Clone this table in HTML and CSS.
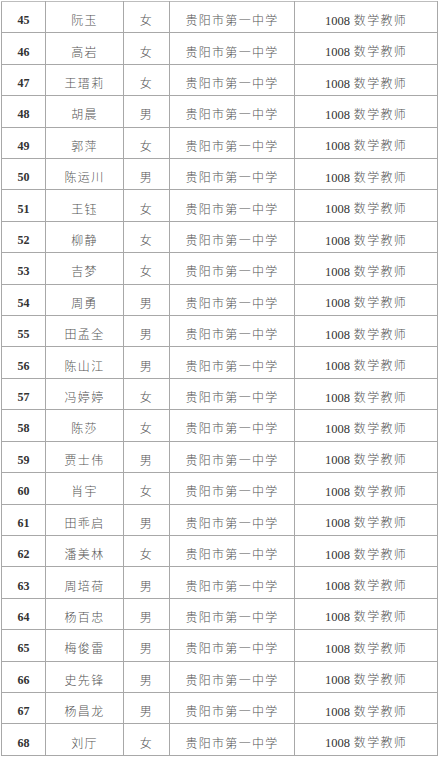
FILE: index.html
```html
<!DOCTYPE html>
<html lang="zh">
<head>
<meta charset="utf-8">
<link rel="stylesheet" href="styles.css">
</head>
<body>
<div class="page">
<table class="roster">
<colgroup><col class="c-no"><col class="c-name"><col class="c-sex"><col class="c-school"><col class="c-job"></colgroup>
<tbody>
<tr><td class="no">45</td><td class="cn">阮玉</td><td class="cn">女</td><td class="cn">贵阳市第一中学</td><td class="job"><span class="num">1008</span> 数学教师</td></tr>
<tr><td class="no">46</td><td class="cn">高岩</td><td class="cn">女</td><td class="cn">贵阳市第一中学</td><td class="job"><span class="num">1008</span> 数学教师</td></tr>
<tr><td class="no">47</td><td class="cn">王瑨莉</td><td class="cn">女</td><td class="cn">贵阳市第一中学</td><td class="job"><span class="num">1008</span> 数学教师</td></tr>
<tr><td class="no">48</td><td class="cn">胡晨</td><td class="cn">男</td><td class="cn">贵阳市第一中学</td><td class="job"><span class="num">1008</span> 数学教师</td></tr>
<tr><td class="no">49</td><td class="cn">郭萍</td><td class="cn">女</td><td class="cn">贵阳市第一中学</td><td class="job"><span class="num">1008</span> 数学教师</td></tr>
<tr><td class="no">50</td><td class="cn">陈运川</td><td class="cn">男</td><td class="cn">贵阳市第一中学</td><td class="job"><span class="num">1008</span> 数学教师</td></tr>
<tr><td class="no">51</td><td class="cn">王钰</td><td class="cn">女</td><td class="cn">贵阳市第一中学</td><td class="job"><span class="num">1008</span> 数学教师</td></tr>
<tr><td class="no">52</td><td class="cn">柳静</td><td class="cn">女</td><td class="cn">贵阳市第一中学</td><td class="job"><span class="num">1008</span> 数学教师</td></tr>
<tr><td class="no">53</td><td class="cn">吉梦</td><td class="cn">女</td><td class="cn">贵阳市第一中学</td><td class="job"><span class="num">1008</span> 数学教师</td></tr>
<tr><td class="no">54</td><td class="cn">周勇</td><td class="cn">男</td><td class="cn">贵阳市第一中学</td><td class="job"><span class="num">1008</span> 数学教师</td></tr>
<tr><td class="no">55</td><td class="cn">田孟全</td><td class="cn">男</td><td class="cn">贵阳市第一中学</td><td class="job"><span class="num">1008</span> 数学教师</td></tr>
<tr><td class="no">56</td><td class="cn">陈山江</td><td class="cn">男</td><td class="cn">贵阳市第一中学</td><td class="job"><span class="num">1008</span> 数学教师</td></tr>
<tr><td class="no">57</td><td class="cn">冯婷婷</td><td class="cn">女</td><td class="cn">贵阳市第一中学</td><td class="job"><span class="num">1008</span> 数学教师</td></tr>
<tr><td class="no">58</td><td class="cn">陈莎</td><td class="cn">女</td><td class="cn">贵阳市第一中学</td><td class="job"><span class="num">1008</span> 数学教师</td></tr>
<tr><td class="no">59</td><td class="cn">贾士伟</td><td class="cn">男</td><td class="cn">贵阳市第一中学</td><td class="job"><span class="num">1008</span> 数学教师</td></tr>
<tr><td class="no">60</td><td class="cn">肖宇</td><td class="cn">女</td><td class="cn">贵阳市第一中学</td><td class="job"><span class="num">1008</span> 数学教师</td></tr>
<tr><td class="no">61</td><td class="cn">田乖启</td><td class="cn">男</td><td class="cn">贵阳市第一中学</td><td class="job"><span class="num">1008</span> 数学教师</td></tr>
<tr><td class="no">62</td><td class="cn">潘美林</td><td class="cn">女</td><td class="cn">贵阳市第一中学</td><td class="job"><span class="num">1008</span> 数学教师</td></tr>
<tr><td class="no">63</td><td class="cn">周培荷</td><td class="cn">男</td><td class="cn">贵阳市第一中学</td><td class="job"><span class="num">1008</span> 数学教师</td></tr>
<tr><td class="no">64</td><td class="cn">杨百忠</td><td class="cn">男</td><td class="cn">贵阳市第一中学</td><td class="job"><span class="num">1008</span> 数学教师</td></tr>
<tr><td class="no">65</td><td class="cn">梅俊雷</td><td class="cn">男</td><td class="cn">贵阳市第一中学</td><td class="job"><span class="num">1008</span> 数学教师</td></tr>
<tr><td class="no">66</td><td class="cn">史先锋</td><td class="cn">男</td><td class="cn">贵阳市第一中学</td><td class="job"><span class="num">1008</span> 数学教师</td></tr>
<tr><td class="no">67</td><td class="cn">杨昌龙</td><td class="cn">男</td><td class="cn">贵阳市第一中学</td><td class="job"><span class="num">1008</span> 数学教师</td></tr>
<tr><td class="no">68</td><td class="cn">刘厅</td><td class="cn">女</td><td class="cn">贵阳市第一中学</td><td class="job"><span class="num">1008</span> 数学教师</td></tr>
</tbody>
</table>
</div>
</body>
</html>
```
FILE: styles.css
```css
html, body {
  margin: 0;
  padding: 0;
  background: #ffffff;
}
.page {
  padding: 1px 0 0 1px;
}
.roster {
  border-collapse: collapse;
  table-layout: fixed;
  width: 437px;
  color: #3a3a3a;
}
.c-no { width: 44px; }
.c-name { width: 78px; }
.c-sex { width: 46px; }
.c-school { width: 125px; }
.c-job { width: 143px; }
.roster td {
  border: 1px solid #a8a8a8;
  height: 31.42px;
  box-sizing: border-box;
  padding: 6px 0 0 0;
  text-align: center;
  vertical-align: middle;
  font-size: 12px;
  line-height: 14px;
  white-space: nowrap;
}
.roster tr:first-child td { border-top-color: #bdbdbd; }
.no, .num {
  font-family: "Liberation Serif", "Times New Roman", serif;
  font-weight: 600;
  font-size: 12.5px;
  color: #333;
}
.cn, .job {
  font-family: "Noto Sans CJK SC", "Noto Sans", sans-serif;
  font-weight: 300;
  letter-spacing: 1.3px;
  color: #555;
}
.job .num {
  letter-spacing: 0;
  font-weight: 400;
}
```
